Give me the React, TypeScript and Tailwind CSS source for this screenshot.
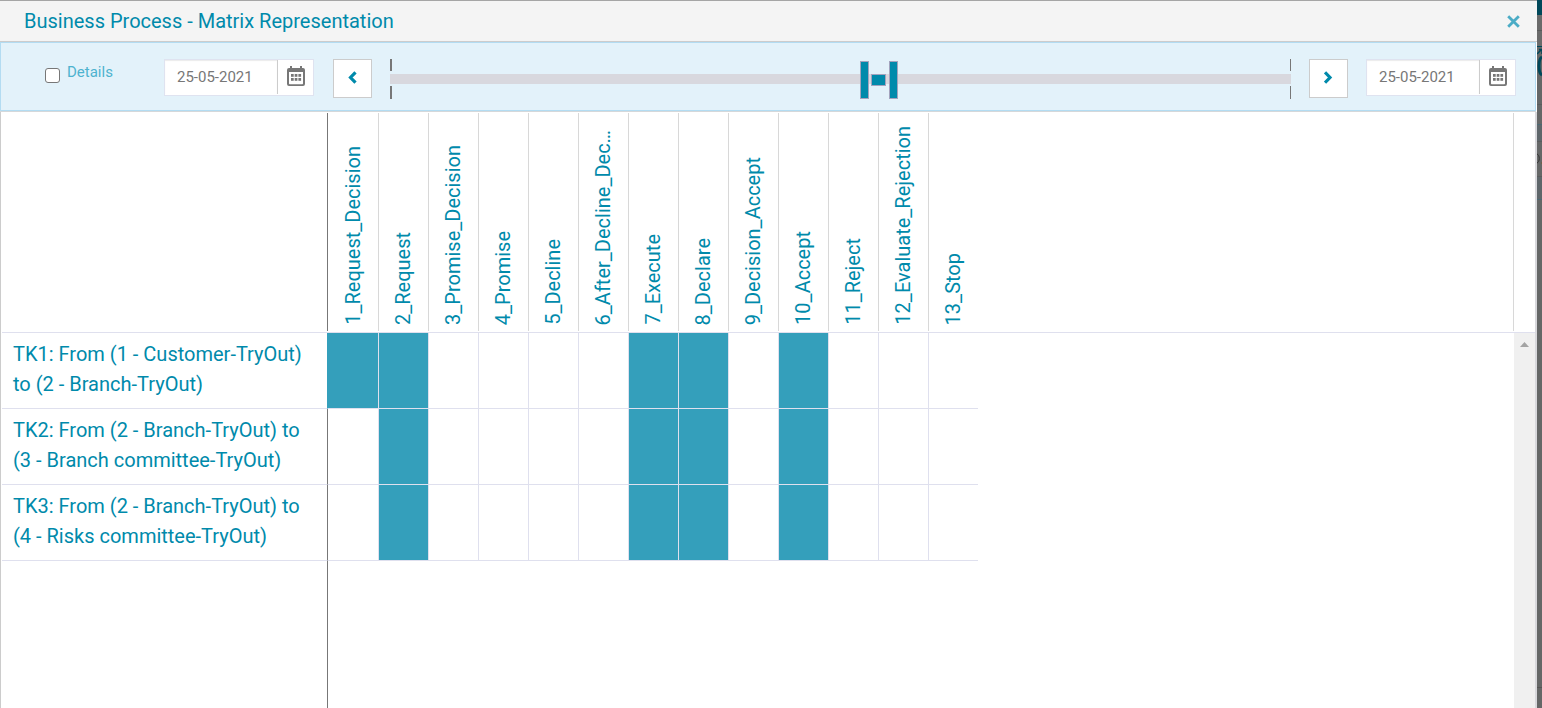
import { useState } from "react";

const columns = [
  "1_Request_Decision",
  "2_Request",
  "3_Promise_Decision",
  "4_Promise",
  "5_Decline",
  "6_After_Decline_Dec…",
  "7_Execute",
  "8_Declare",
  "9_Decision_Accept",
  "10_Accept",
  "11_Reject",
  "12_Evaluate_Rejection",
  "13_Stop",
];

const rows = [
  { name: "TK1: From (1 - Customer-TryOut) to (2 - Branch-TryOut)", active: [0, 1, 6, 7, 9] },
  { name: "TK2: From (2 - Branch-TryOut) to (3 - Branch committee-TryOut)", active: [1, 6, 7, 9] },
  { name: "TK3: From (2 - Branch-TryOut) to (4 - Risks committee-TryOut)", active: [1, 6, 7, 9] },
];

function CalendarIcon() {
  return (
    <svg width="18" height="20" viewBox="0 0 18 20" fill="#777" aria-hidden="true">
      <path
        d="M3 0h2v2h8V0h2v2h1a2 2 0 0 1 2 2v14a2 2 0 0 1-2 2H2a2 2 0 0 1-2-2V4a2 2 0 0 1 2-2h1zM2 6V17.500a.7.7 0 0 0 .7.7h12.600a.7.7 0 0 0 .7-.7V6z"
        fillRule="evenodd"
      />
      {[4, 7.7, 11.4].map((x) =>
        [8, 12].map((y) => <rect key={`${x}-${y}`} x={x} y={y} width="2.7" height="2.8" />)
      )}
    </svg>
  );
}

function Chevron({ direction }: { direction: "left" | "right" }) {
  return (
    <svg width="9" height="13" viewBox="0 0 9 13" fill="none" stroke="currentColor" strokeWidth="3.200" aria-hidden="true">
      <path d={direction === "left" ? "M7.500 1.300L2.500 6.500L7.500 11.700" : "M1 1.300L6 6.500L1 11.700"} />
    </svg>
  );
}

function DateField({ label }: { label: string }) {
  const [value, setValue] = useState("25-05-2021");
  return (
    <div className="flex h-[37px] w-[150px] shrink-0 border border-[#dfe3f0] bg-white">
      <input
        aria-label={label}
        value={value}
        onChange={(e) => setValue(e.target.value)}
        className="mb-px min-w-0 flex-1 border-r border-[#ccc] bg-white pl-3 text-[15px] text-[#777] shadow-[inset_0_1px_1px_rgba(0,0,0,0.08)] outline-none"
      />
      <button aria-label={`Open calendar for ${label}`} className="flex w-[35px] items-center justify-center pb-1">
        <CalendarIcon />
      </button>
    </div>
  );
}

const stepButton =
  "flex h-[39px] w-[39px] shrink-0 items-center justify-center border border-[#ccc] bg-white pb-0.5 text-[#008aab]";

function RangeSlider() {
  return (
    <div className="relative mx-[18px] flex h-10 flex-1 items-center">
      <div className="flex h-full w-full flex-col justify-between">
        <div className="flex h-3 justify-between">
          <span className="w-0.5 bg-[#777]" />
          <span className="w-px bg-[#777]" />
        </div>
        <div className="h-2.5 bg-[#d8d8de]" />
        <div className="flex h-[13px] justify-between">
          <span className="w-0.5 bg-[#777]" />
          <span className="w-px bg-[#777]" />
        </div>
      </div>
      <div className="absolute left-[52.2%] top-0.5 flex h-[38px] items-center gap-0.5">
        <button aria-label="Range start" className="h-full w-[9px] border border-[#a3a3bd] bg-[#008aab]" />
        <button aria-label="Move range" className="h-3 w-[15px] border border-[#a3a3bd] bg-[#008aab]" />
        <button aria-label="Range end" className="ml-px h-full w-[9px] border border-[#a3a3bd] bg-[#008aab]" />
      </div>
    </div>
  );
}

function Matrix() {
  return (
    <table className="h-full w-full table-fixed border-separate border-spacing-0 text-xl leading-[30px] text-[#008aab]">
      <colgroup>
        <col className="w-[326px]" />
        {columns.map((c, i) => (
          <col key={c} className={i === 0 ? "w-[51px]" : i === columns.length - 1 ? "w-[49px]" : "w-[50px]"} />
        ))}
        <col />
      </colgroup>
      <thead>
        <tr className="h-[221px]">
          <th aria-label="Transaction" className="border-b border-[#dfe0ee] px-0 py-px">
            <div className="h-[218px] border-r border-[#777]" />
          </th>
          {columns.map((c, i) => (
            <th key={c} scope="col" className="border-b border-[#dfe0ee] px-0 py-px font-normal">
              <div
                className={`flex h-[218px] items-end justify-center pb-1.5 pr-px ${
                  i < columns.length - 1 ? "border-r border-[#d8d8d8]" : ""
                }`}
              >
                <span className="rotate-180 whitespace-nowrap text-left [writing-mode:vertical-rl]">{c}</span>
              </div>
            </th>
          ))}
          <td className="border-b border-[#dfe0ee]" />
        </tr>
      </thead>
      <tbody>
        {rows.map((row) => (
          <tr key={row.name} className="h-[76px]">
            <th
              scope="row"
              className={`border-b border-r border-b-[#dfe0ee] px-0 py-0 text-left align-top font-normal ${
                row.active.includes(0) ? "border-r-[#349fbb]" : "border-r-[#777]"
              }`}
            >
              <div className="pl-[11px] pr-4 pt-1.5">{row.name}</div>
            </th>
            {columns.map((c, i) => (
              <td
                key={c}
                className={`border-b border-[#dfe0ee] p-0 ${i < columns.length - 1 ? "border-r" : ""} ${
                  row.active.includes(i) ? "bg-[#349fbb]" : ""
                }`}
              />
            ))}
            <td />
          </tr>
        ))}
        <tr>
          <td className="border-r border-[#777]" />
          <td colSpan={columns.length + 1} />
        </tr>
      </tbody>
    </table>
  );
}

function PageBehind() {
  return (
    <aside aria-hidden="true" className="flex w-[5px] shrink-0 flex-col overflow-hidden bg-[#656767]">
      <div className="h-[15px] shrink-0 bg-[#00485a]" />
      <div className="h-4 shrink-0 border-b border-[#585a5a] bg-[#6a6a6a]" />
      <div className="h-[15px] shrink-0 bg-[#6a6a6a]" />
      <svg className="shrink-0" width="5" height="34" viewBox="0 0 5 34" fill="none" stroke="#00485a">
        <path d="M0 .5h5" />
        <path d="M0 8L4 4M2 3.500h3V8" strokeWidth="1.500" />
        <path d="M5 11C1 13 1 27 5 29" strokeWidth="3" />
      </svg>
      <div className="h-[25px] shrink-0 border-b border-[#5a5c5d]" />
      <div className="h-5 shrink-0 border-b border-[#4b6874]" />
      <div className="h-[17px] shrink-0 border-b border-[#5a5c5d] bg-[#5e666a]" />
      <div className="flex h-[35px] shrink-0 items-center border-b border-[#5a5c5d]">
        <svg width="5" height="12" viewBox="0 0 5 12" fill="none" stroke="#333">
          <path d="M0 1C3 2 3 9 0 10" />
          <path d="M4 10h1" stroke="#7a5a30" />
        </svg>
      </div>
      <div className="h-[23px] shrink-0 border-b border-[#4b6874] bg-[#5e666a]" />
      <div className="h-[488px] shrink-0 border-b border-[#555]" />
      <div className="flex-1" />
    </aside>
  );
}

export default function App() {
  return (
    <div className="flex h-screen overflow-hidden bg-white font-[Roboto,sans-serif]">
      <main className="flex min-w-0 flex-1 flex-col">
        <header className="flex h-[42px] shrink-0 items-center justify-between border-b border-t border-b-[#ccc] border-t-[#a5a5a5] bg-[#f4f4f4] pl-6 pr-[17px]">
          <h1 className="text-xl text-[#008aab]">Business Process - Matrix Representation</h1>
          <button aria-label="Close" className="text-[#4bacc6]">
            <svg width="13" height="13" viewBox="0 0 13 13" stroke="currentColor" strokeWidth="2.800" aria-hidden="true">
              <path d="M1.200 1.200l10.600 10.600M11.800 1.200L1.200 11.800" />
            </svg>
          </button>
        </header>
        <div className="mr-px flex h-[70px] shrink-0 flex-col border-b border-[#d5d8da]">
          <div className="flex flex-1 items-start border border-[#b3dcf2] bg-[#e3f2fa] pl-11 pr-[19px] pt-4">
            <label className="flex h-8 w-[119px] shrink-0 gap-[7px] text-[15px] leading-[26px] text-[#4db3cf]">
              <input
                type="checkbox"
                className="mt-[9px] h-[15px] w-[15px] shrink-0 appearance-none rounded-[3px] border border-[#777] bg-white checked:bg-[#008aab]"
              />
              Details
            </label>
            <DateField label="Start date" />
            <button aria-label="Previous" className={`ml-[19px] ${stepButton}`}>
              <Chevron direction="left" />
            </button>
            <RangeSlider />
            <button aria-label="Next" className={`mr-[18px] ${stepButton}`}>
              <Chevron direction="right" />
            </button>
            <DateField label="End date" />
          </div>
        </div>
        <section className="flex min-h-0 flex-1 border-l border-r-2 border-l-[#ccc] border-r-[#d8d8dc] pl-px">
          <div className="min-w-0 flex-1">
            <Matrix />
          </div>
          <div className="flex w-[22px] shrink-0 flex-col">
            <div className="h-[221px] shrink-0 border-b border-[#dfe0ee] py-px">
              <div className="h-[218px] border-l border-[#d8d8d8]" />
            </div>
            <div className="ml-px flex flex-1 justify-center bg-[#f0f0f0] pt-[9px]">
              <svg width="9" height="5" viewBox="0 0 9 5" fill="#a3a3a3" aria-hidden="true">
                <path d="M4.500 0L9 5H0z" />
              </svg>
            </div>
          </div>
        </section>
      </main>
      <PageBehind />
    </div>
  );
}
